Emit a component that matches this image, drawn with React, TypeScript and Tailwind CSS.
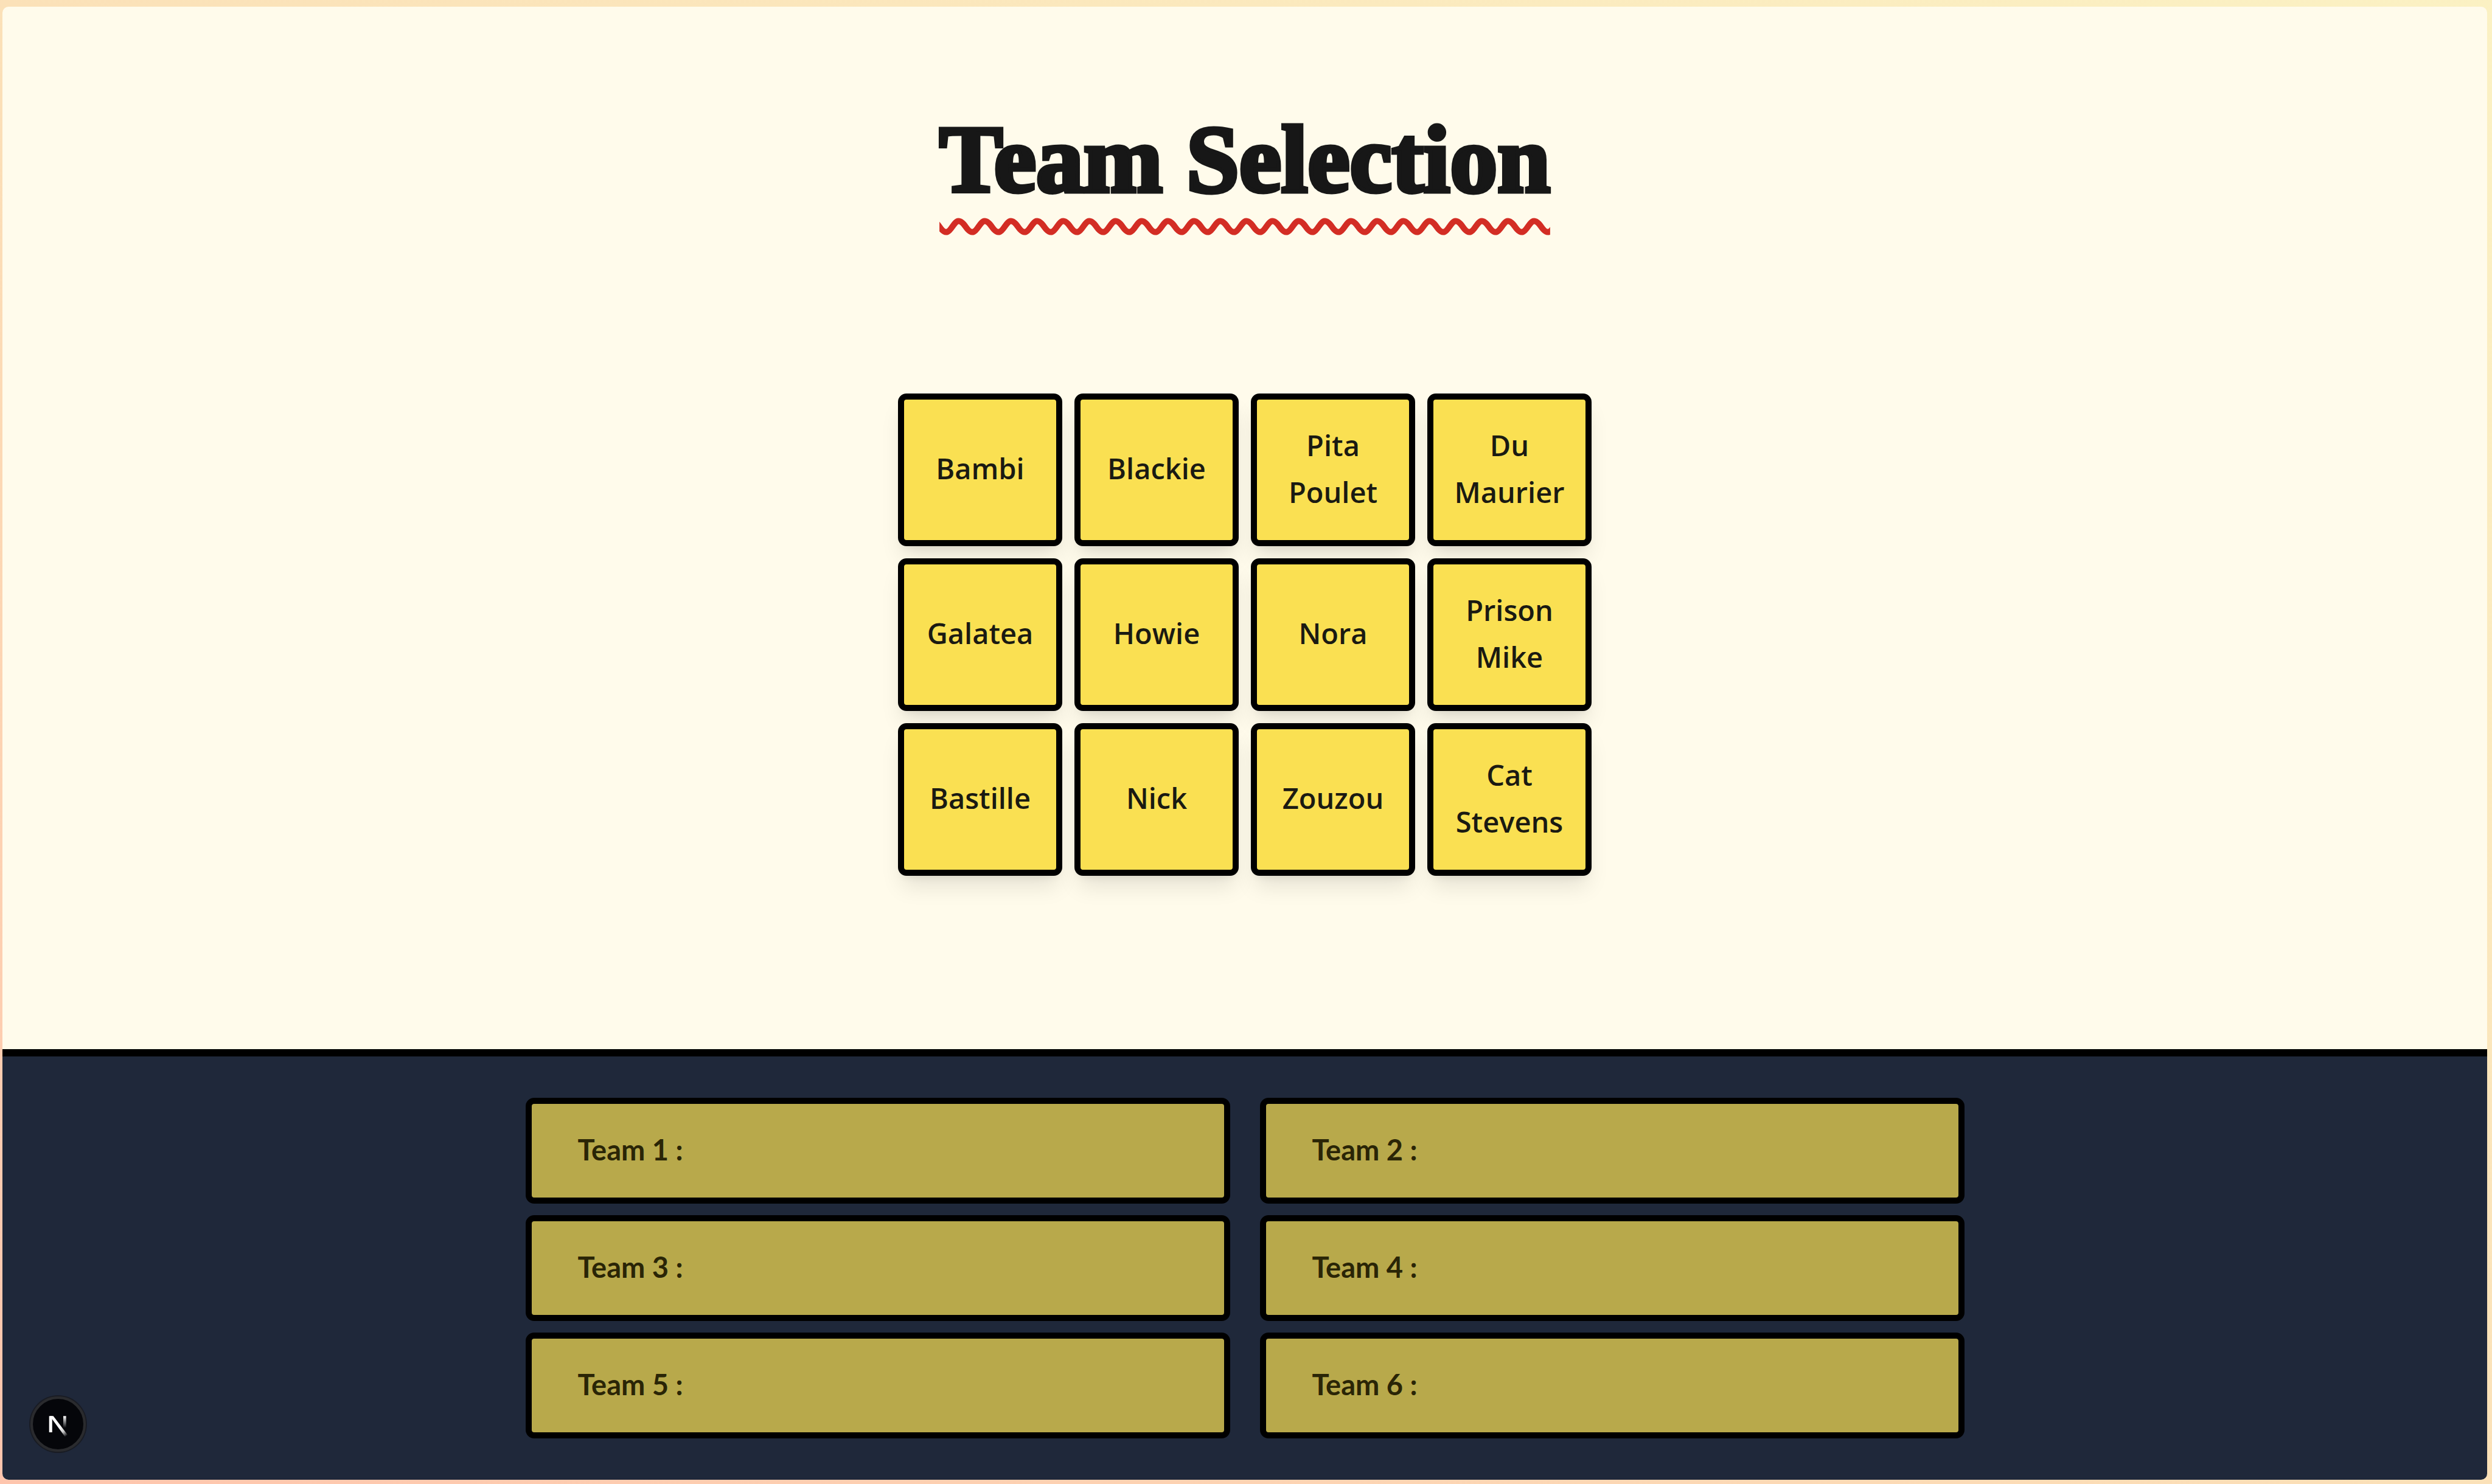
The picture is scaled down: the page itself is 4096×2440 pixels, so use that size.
const players = [
  'Bambi', 'Blackie', 'Pita Poulet', 'Du Maurier',
  'Galatea', 'Howie', 'Nora', 'Prison Mike',
  'Bastille', 'Nick', 'Zouzou', 'Cat Stevens',
];

const teams = [1, 2, 3, 4, 5, 6];

function PlayerCard({ name }: { name: string }) {
  return (
    <button
      type="button"
      className="flex h-[251px] items-center justify-center rounded-[14px] border-10 border-black bg-[#fae052] px-8 pb-1 text-center font-['Open_Sans',sans-serif] text-[47px] leading-[77px] font-semibold text-[#1a1a12] shadow-[0_24px_36px_-7px_rgba(0,0,0,0.1),0_10px_15px_-10px_rgba(0,0,0,0.1)]"
    >
      {name}
    </button>
  );
}

function TeamSlot({ number }: { number: number }) {
  return (
    <li className="flex h-[174px] items-center rounded-[14px] border-10 border-black bg-[#b8a94b] px-19 pb-1 font-['Lato',sans-serif] text-[47px] leading-[64px] font-bold text-[#2a2506]">
      Team {number} :
    </li>
  );
}

function DevToolsButton() {
  return (
    <button
      type="button"
      aria-label="Open dev tools"
      className="fixed bottom-[53px] left-[50px] size-[91px] rounded-full border-4 border-[#2a2b2e] bg-[#05060a] ring-2 ring-[#191c24]"
    >
      <svg viewBox="170 98 264 264" className="size-full" fill="none" aria-hidden="true">
        <defs>
          <linearGradient id="diagonal" x1="310" y1="245" x2="347" y2="293" gradientUnits="userSpaceOnUse">
            <stop stopColor="#fff" />
            <stop offset="0.5" stopColor="#fff" stopOpacity="0.8" />
            <stop offset="1" stopColor="#fff" stopOpacity="0" />
          </linearGradient>
          <linearGradient id="stem" x1="336" y1="188" x2="336" y2="250" gradientUnits="userSpaceOnUse">
            <stop stopColor="#fff" />
            <stop offset="1" stopColor="#fff" stopOpacity="0" />
          </linearGradient>
        </defs>
        <path d="M255 188H271V273H255Z" fill="#fff" />
        <path d="M259 188H277L351 286L338 296Z" fill="url(#diagonal)" />
        <path d="M329 188H344V250H329Z" fill="url(#stem)" />
      </svg>
    </button>
  );
}

export default function App() {
  return (
    <div className="flex min-h-screen flex-col bg-linear-to-tr from-[#fec5ad] via-[#fbe1b8] to-[#fbf1c3] pt-[11px] pr-2 pb-[7px] pl-1">
      <div className="flex grow flex-col overflow-hidden rounded-[10px] bg-[#fffbeb]">
        <main className="flex grow flex-col items-center pt-[157px]">
          <h1 className="font-['Liberation_Serif',serif] text-[156px] leading-[190px] font-bold text-[#171717] underline decoration-[#d32d24] decoration-wavy decoration-10 underline-offset-[46px] [-webkit-text-stroke:7px_#171717] [text-decoration-skip-ink:none]">
            Team Selection
          </h1>
          <div className="mt-[289px] grid grid-cols-[repeat(4,270px)] gap-5">
            {players.map((name) => (
              <PlayerCard key={name} name={name} />
            ))}
          </div>
        </main>
        <section aria-label="Teams" className="border-t-12 border-black bg-[#1f283a] py-[68px]">
          <ul className="mx-auto grid w-full max-w-[2365px] grid-cols-2 gap-x-[49px] gap-y-[19px]">
            {teams.map((number) => (
              <TeamSlot key={number} number={number} />
            ))}
          </ul>
        </section>
      </div>
      <DevToolsButton />
    </div>
  );
}
